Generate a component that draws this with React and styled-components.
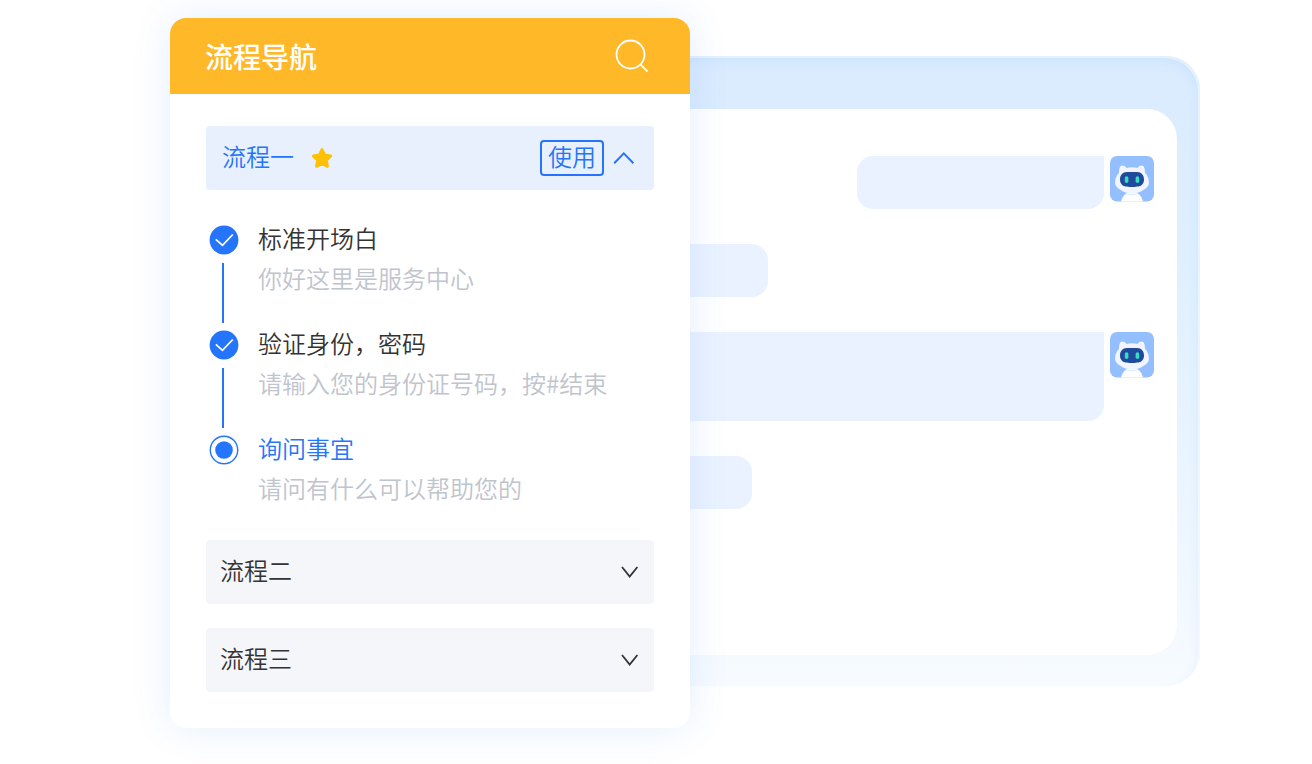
import React, { useState } from 'react';
import styled, { createGlobalStyle } from 'styled-components';

const GlobalStyle = createGlobalStyle`
  * { box-sizing: border-box; }
  body {
    margin: 0;
    background: #ffffff;
    color: #333333;
    font-family: "Noto Sans CJK SC", sans-serif;
    font-weight: 350;
  }
  h1, h2, p, ol { margin: 0; padding: 0; font-weight: inherit; }
  button {
    margin: 0;
    padding: 0;
    border: 0;
    background: none;
    color: inherit;
    font: inherit;
    cursor: pointer;
  }
  svg { display: block; }
`;

const Stage = styled.main`
  display: flex;
  align-items: flex-start;
  max-width: 1312px;
  padding: 18px 112px 36px 170px;
`;

const Card = styled.section`
  position: relative;
  z-index: 1;
  flex: 0 0 520px;
  border-radius: 16px;
  overflow: hidden;
  background: #ffffff;
  box-shadow: 0 0 40px rgba(36, 117, 252, 0.12);
`;

const CardHeader = styled.header`
  display: flex;
  align-items: center;
  justify-content: space-between;
  height: 76px;
  padding: 0 40px 0 35px;
  background: #ffb827;
  color: #ffffff;
`;

const CardTitle = styled.h1`
  font-size: 28px;
  line-height: 40px;
  && { font-weight: 500; }
`;

const CardBody = styled.div`
  display: flex;
  flex-direction: column;
  padding: 32px 36px 36px;
`;

const FlowRow = styled.div`
  display: flex;
  align-items: center;
  height: 64px;
  padding: ${(p) => (p.$open ? '0 18px 0 16px' : '0 14px')};
  border-radius: 4px;
  background: ${(p) => (p.$open ? '#e8f0fe' : '#f4f6fa')};
  color: ${(p) => (p.$open ? '#2475fc' : '#333333')};

  & + & { margin-top: 24px; }
`;

const FlowName = styled.h2`
  padding-bottom: 4px;
  font-size: 24px;
  line-height: 40px;
`;

const StarSlot = styled.span`
  flex: 1;
  padding-left: 16px;
`;

const UseButton = styled.button`
  width: 64px;
  height: 36px;
  padding-bottom: 4px;
  margin-right: 8px;
  border: 2px solid #2475fc;
  border-radius: 4px;
  font-size: 24px;
  line-height: 28px;
`;

const ToggleButton = styled.button`
  margin-left: auto;
`;

const Steps = styled.ol`
  padding: 28px 4px 32px;
  list-style: none;
`;

const Step = styled.li`
  display: flex;
  gap: 20px;
  font-size: 24px;
  line-height: 40px;

  &:not(:last-child) { padding-bottom: 25px; }
`;

const Track = styled.div`
  flex: none;
  width: 28px;
  height: 80px;
  padding-top: 8px;
`;

const Connector = styled.div`
  width: 2px;
  height: 60px;
  margin: 9px 0 0 12px;
  background: #2475fc;
`;

const StepTitle = styled.p`
  color: ${(p) => (p.$active ? '#2475fc' : '#333333')};
`;

const StepText = styled.p`
  color: #bfc4cd;
`;

const ChatFrame = styled.section`
  flex: 1;
  min-width: 0;
  margin: 38px 0 0 -80px;
  padding: 53px 23px 31px 24px;
  border-radius: 34px;
  background: linear-gradient(180deg, #daebfe 0%, #ddeeff 25%, #e6f3ff 55%, #f1f8ff 85%, #f7fbff 100%);
  box-shadow:
    inset -2px 2px 0 rgba(255, 255, 255, 0.45),
    inset -4px 6px 12px -4px rgba(150, 198, 255, 0.3);
`;

const ChatBoard = styled.div`
  display: flex;
  flex-direction: column;
  min-height: 546px;
  padding: 47px 23px 47px 16px;
  border-radius: 30px;
  background: #ffffff;
`;

const Message = styled.div`
  display: flex;
  align-items: flex-start;
  justify-content: ${(p) => (p.$own ? 'flex-end' : 'flex-start')};
  gap: 6px;

  & + & { margin-top: 35px; }
`;

const Bubble = styled.div`
  flex: ${(p) => (p.$width ? `0 0 ${p.$width}px` : 1)};
  height: ${(p) => (p.$tall ? 89 : 53)}px;
  border-radius: ${(p) => (p.$own ? '16px 0 16px 16px' : '16px')};
  background: #eaf2ff;
`;

const SearchIcon = () => (
  <svg width="36" height="36" viewBox="0 0 36 36" fill="none" stroke="#fff" strokeWidth="1.8" aria-hidden="true">
    <circle cx="16.5" cy="16.5" r="14" />
    <path d="M26.4 26.4L33.5 33.5" />
  </svg>
);

const StarIcon = () => (
  <svg width="24" height="24" viewBox="0 0 24 24" aria-hidden="true">
    <path
      d="M12 3.6l2.7 5.5 6 .9-4.3 4.3 1 6L12 17.5l-5.4 2.8 1-6L3.300 10l6-.9z"
      fill="#ffc107"
      stroke="#ffc107"
      strokeWidth="3"
      strokeLinejoin="round"
    />
  </svg>
);

const ChevronUp = () => (
  <svg width="24" height="24" viewBox="0 0 24 24" fill="none" stroke="currentColor" strokeWidth="2" aria-hidden="true">
    <path d="M2.200 17.300L11.800 7.400L21.400 17.300" />
  </svg>
);

const ChevronDown = () => (
  <svg width="20" height="20" viewBox="0 0 20 20" fill="none" stroke="currentColor" strokeWidth="1.8" aria-hidden="true">
    <path d="M2 5L9.700 14.500L17.400 5" />
  </svg>
);

const DoneIcon = () => (
  <svg width="28" height="28" viewBox="0 0 28 28" overflow="visible" aria-hidden="true">
    <circle cx="14" cy="14" r="14.400" fill="#2475fc" />
    <path d="M5.800 13.300L12.500 19.300L22.800 8.500" fill="none" stroke="#fff" strokeWidth="1.800" />
  </svg>
);

const CurrentIcon = () => (
  <svg width="28" height="28" viewBox="0 0 28 28" overflow="visible" aria-hidden="true">
    <circle cx="14" cy="14" r="13.700" fill="#fff" stroke="#2475fc" strokeWidth="1.400" />
    <circle cx="14" cy="14" r="8.800" fill="#2475fc" />
  </svg>
);

const RobotAvatar = () => (
  <svg width="44" height="46" viewBox="0 0 44 46" role="img" aria-label="机器人">
    <rect width="44" height="45.500" rx="7" fill="#94bfff" />
    <path d="M11 45.500c1-4.500 3.500-7.500 6.500-8.500h9c3 1 5.500 4 6.500 8.500z" fill="#fff" />
    <path
      d="M9 17C9 12 10 9.500 12.500 9.500c1.700 0 3 1.200 4 2.500 3.500-1 7.500-1 11 0 1-1.300 2.300-2.500 4-2.500C34 9.500 35 12 35 17c2.500 2 4 6 4 9.500 0 3-2 5.500-5 7-3 2.500-7.500 4-12 4s-9-1.500-12-4c-3-1.500-5-4-5-7C5 23 6.500 19 9 17z"
      fill="#f1f5ff"
    />
    <path d="M16 37.500c3.500 1.600 8.500 1.600 12 0" fill="none" stroke="#dbe7fd" />
    <path
      d="M17 16h10c4.500 0 7 3.200 7 7.500s-2.500 7-7 7c-3.500.7-6.500.7-10 0-4.500 0-7-2.700-7-7s2.500-7.500 7-7.500z"
      fill="#204a9c"
    />
    <rect x="14.800" y="20.300" width="3.600" height="6.800" rx="1.800" fill="#35dfc0" />
    <rect x="25.600" y="20.300" width="3.600" height="6.800" rx="1.800" fill="#35dfc0" />
  </svg>
);

const steps = [
  { title: '标准开场白', text: '你好这里是服务中心' },
  { title: '验证身份，密码', text: '请输入您的身份证号码，按#结束' },
  { title: '询问事宜', text: '请问有什么可以帮助您的', active: true },
];

const messages = [
  { own: true, width: 247 },
  { width: 118 },
  { own: true, tall: true },
  { width: 102 },
];

export default function App() {
  const [open, setOpen] = useState(true);

  return (
    <>
      <GlobalStyle />
      <Stage>
        <Card>
          <CardHeader>
            <CardTitle>流程导航</CardTitle>
            <button type="button" aria-label="搜索">
              <SearchIcon />
            </button>
          </CardHeader>
          <CardBody>
            <FlowRow $open>
              <FlowName>流程一</FlowName>
              <StarSlot>
                <StarIcon />
              </StarSlot>
              <UseButton type="button">使用</UseButton>
              <ToggleButton
                type="button"
                aria-label="收起流程一"
                aria-expanded={open}
                onClick={() => setOpen(!open)}
              >
                <ChevronUp />
              </ToggleButton>
            </FlowRow>
            {open && (
              <Steps>
                {steps.map((step, i) => (
                  <Step key={step.title}>
                    <Track>
                      {step.active ? <CurrentIcon /> : <DoneIcon />}
                      {i < steps.length - 1 && <Connector />}
                    </Track>
                    <div>
                      <StepTitle $active={step.active}>{step.title}</StepTitle>
                      <StepText>{step.text}</StepText>
                    </div>
                  </Step>
                ))}
              </Steps>
            )}
            {['流程二', '流程三'].map((name) => (
              <FlowRow key={name}>
                <FlowName>{name}</FlowName>
                <ToggleButton type="button" aria-label={`展开${name}`} aria-expanded={false}>
                  <ChevronDown />
                </ToggleButton>
              </FlowRow>
            ))}
          </CardBody>
        </Card>
        <ChatFrame aria-label="对话">
          <ChatBoard>
            {messages.map((m, i) => (
              <Message key={i} $own={m.own}>
                <Bubble $own={m.own} $tall={m.tall} $width={m.width} />
                {m.own && <RobotAvatar />}
              </Message>
            ))}
          </ChatBoard>
        </ChatFrame>
      </Stage>
    </>
  );
}
